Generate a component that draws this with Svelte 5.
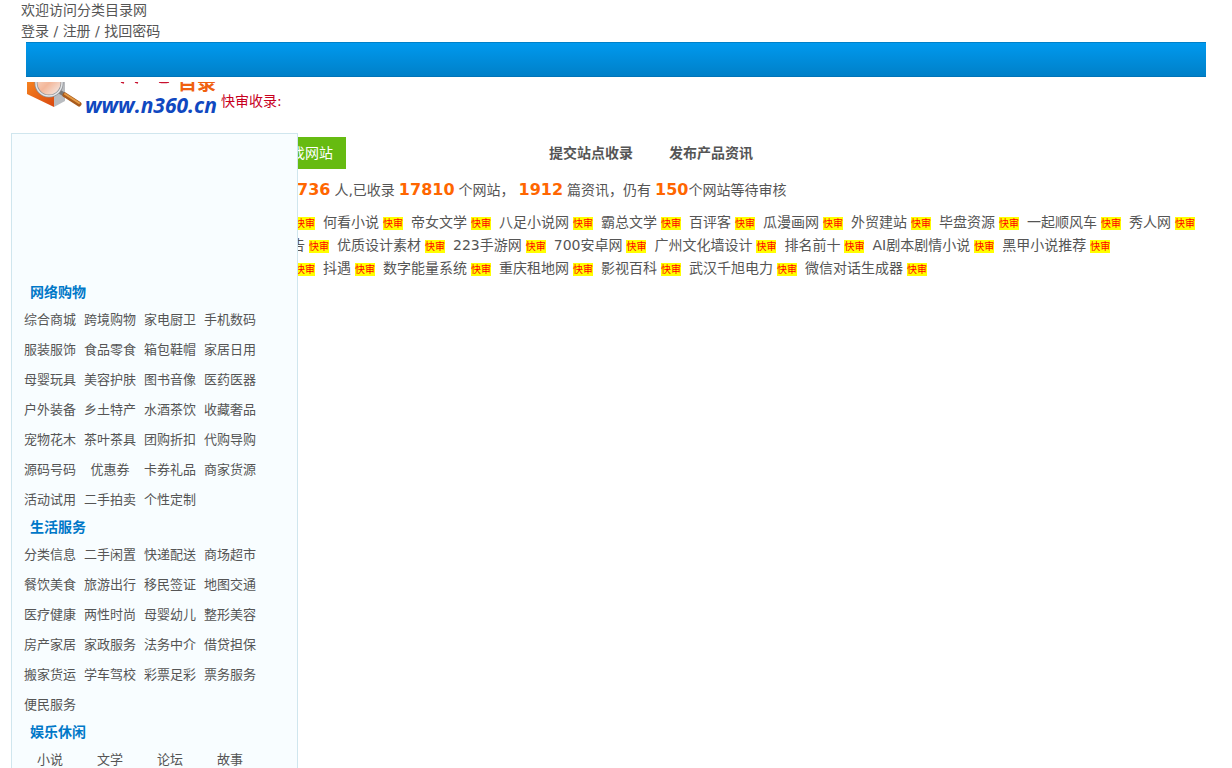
<script lang="ts">
    const categories = [
        {
            title: '网络购物',
            items: [
                '综合商城', '跨境购物', '家电厨卫', '手机数码',
                '服装服饰', '食品零食', '箱包鞋帽', '家居日用',
                '母婴玩具', '美容护肤', '图书音像', '医药医器',
                '户外装备', '乡土特产', '水酒茶饮', '收藏奢品',
                '宠物花木', '茶叶茶具', '团购折扣', '代购导购',
                '源码号码', '优惠券', '卡券礼品', '商家货源',
                '活动试用', '二手拍卖', '个性定制',
            ],
        },
        {
            title: '生活服务',
            items: [
                '分类信息', '二手闲置', '快递配送', '商场超市',
                '餐饮美食', '旅游出行', '移民签证', '地图交通',
                '医疗健康', '两性时尚', '母婴幼儿', '整形美容',
                '房产家居', '家政服务', '法务中介', '借贷担保',
                '搬家货运', '学车驾校', '彩票足彩', '票务服务',
                '便民服务',
            ],
        },
        {
            title: '娱乐休闲',
            items: ['小说', '文学', '论坛', '故事'],
        },
    ]

    // an empty name leaves only the badge
    const siteRows = [
        ['', '何看小说', '帝女文学', '八足小说网', '霸总文学', '百评客', '瓜漫画网', '外贸建站', '毕盘资源', '一起顺风车', '秀人网'],
        ['告', '优质设计素材', '223手游网', '700安卓网', '广州文化墙设计', '排名前十', 'AI剧本剧情小说', '黑甲小说推荐'],
        ['', '抖遇', '数字能量系统', '重庆租地网', '影视百科', '武汉千旭电力', '微信对话生成器'],
    ]
</script>

<div class="page">
    <header>
        <div class="welcome">
            <div>欢迎访问分类目录网</div>
            <div><a href="#login">登录</a> / <a href="#register">注册</a> / <a href="#password">找回密码</a></div>
        </div>
        <nav class="nav-bar" aria-label="导航"></nav>
        <div class="brand">
            <a class="logo" href="#home" aria-label="www.n360.cn">
                <svg width="190" height="38" viewBox="0 0 190 38">
                    <defs>
                        <linearGradient id="box" x1="0" y1="0" x2="1" y2="1">
                            <stop offset="0" stop-color="#f58220" />
                            <stop offset="1" stop-color="#d9480f" />
                        </linearGradient>
                        <linearGradient id="lens" x1="0" y1="0" x2="1" y2="1">
                            <stop offset="0" stop-color="#fbe3d3" />
                            <stop offset="0.5" stop-color="#f3b79a" />
                            <stop offset="1" stop-color="#f4f4f4" />
                        </linearGradient>
                    </defs>
                    <path d="M0 0H27V25L0 12Z" fill="url(#box)" />
                    <path d="M27 0H38V19L27 25Z" fill="#b9bcc0" />
                    <circle cx="22" cy="1" r="13" fill="url(#lens)" stroke="#8e9196" stroke-width="3" />
                    <circle cx="22" cy="1" r="13" fill="none" stroke="#e4e6e8" stroke-width="1.5" />
                    <path d="M33 10L38 13" stroke="#777" stroke-width="4" />
                    <path d="M38 13L52 22" stroke="#a85a1c" stroke-width="5" stroke-linecap="round" />
                    <path d="M38 12L52 21" stroke="#e39a45" stroke-width="2" stroke-linecap="round" />
                    <path d="M94 0L97 1M108 0L111 1M132 0Q137 1 142 0" fill="none" stroke="#c8102e" stroke-width="1.5" />
                    <text class="logo-name" x="151" y="8">目录</text>
                    <text class="logo-url" x="58" y="31">www.n360.cn</text>
                </svg>
            </a>
            <span class="fast-label">快审收录:</span>
        </div>
    </header>

    <div class="columns">
        <aside>
            {#each categories as category (category.title)}
                <h2>{category.title}</h2>
                <ul>
                    {#each category.items as item (item)}
                        <li><a href="#category">{item}</a></li>
                    {/each}
                </ul>
            {/each}
        </aside>

        <main>
            <div class="actions">
                <button type="button">找网站</button>
                <div class="submit-links">
                    <a href="#submit">提交站点收录</a>
                    <a href="#publish">发布产品资讯</a>
                </div>
            </div>
            <p class="stats">
                <b>736</b>
                <span>人,已收录</span>
                <b>17810</b>
                <span>个网站，</span>
                <b>1912</b>
                <span>篇资讯，仍有</span>
                <span><b>150</b>个网站等待审核</span>
            </p>
            {#each siteRows as row}
                <div class="site-row" class:unnamed={!row[0]}>
                    {#each row as name}
                        <a href="#site">{name}<span class="badge">快审</span></a>
                    {/each}
                </div>
            {/each}
        </main>
    </div>
</div>

<style>
    :global(body) {
        margin: 0;
        background: #fff;
    }

    .page {
        font-family: 'DejaVu Sans', 'Noto Sans CJK SC', sans-serif;
        font-size: 14px;
        line-height: 21px;
        color: #555;
        height: 100vh;
        overflow: hidden;
    }

    a {
        color: inherit;
        text-decoration: none;
    }

    .welcome {
        padding-left: 21px;
    }

    .nav-bar {
        height: 35px;
        margin: 0 26px;
        box-sizing: border-box;
        border-top: 1px solid #0080c8;
        border-bottom: 1px solid #0074b8;
        background: linear-gradient(#0099ee, #0080c8);
    }

    .brand {
        display: flex;
        align-items: center;
        gap: 4px;
        height: 38px;
        padding: 5px 27px 13px;
    }

    .logo svg {
        display: block;
    }

    .logo-name {
        font: bold 19px 'Noto Sans CJK SC', sans-serif;
        fill: #f06010;
    }

    .logo-url {
        font: italic bold 21px 'Open Sans', sans-serif;
        fill: #1048c0;
    }

    .fast-label {
        line-height: 23px;
        color: #c8001e;
    }

    .columns {
        display: flex;
        align-items: flex-start;
        padding-left: 11px;
    }

    /* the category panel lies over the start of the content */
    aside {
        position: relative;
        z-index: 1;
        flex: none;
        width: 287px;
        box-sizing: border-box;
        padding: 146px 8px 0;
        border: 1px solid #d0e6ee;
        background: #f8fdff;
    }

    aside h2 {
        margin: 0;
        padding-left: 10px;
        font-size: 14px;
        line-height: 25px;
        color: #0078c8;
    }

    aside ul {
        display: grid;
        grid-template-columns: repeat(4, 60px);
        margin: 0;
        padding: 0;
        list-style: none;
        font-size: 13px;
        line-height: 30px;
        text-align: center;
    }

    main {
        flex: 1;
        min-width: 0;
        margin-left: -7px;
        padding-top: 4px;
        white-space: nowrap;
    }

    .actions {
        display: flex;
        align-items: center;
        gap: 203px;
    }

    .actions button {
        height: 32px;
        padding: 0 13px 0 0;
        border: 0;
        background: #66bb11;
        color: #fff;
        font: inherit;
        cursor: pointer;
    }

    .submit-links {
        display: flex;
        gap: 36px;
        font-weight: bold;
    }

    .stats {
        display: flex;
        align-items: baseline;
        gap: 4px;
        margin: 10px 0;
        padding-left: 6px;
        line-height: 22px;
    }

    .stats b {
        font-size: 16px;
        color: #ff6600;
    }

    .site-row {
        display: flex;
        gap: 8px;
        line-height: 23px;
    }

    .site-row.unnamed {
        padding-left: 4px;
    }

    .site-row a {
        display: flex;
        align-items: center;
        gap: 4px;
    }

    .badge {
        margin-top: 1px;
        background: #ff0;
        color: #f00;
        font-size: 10px;
        line-height: 13px;
    }
</style>
